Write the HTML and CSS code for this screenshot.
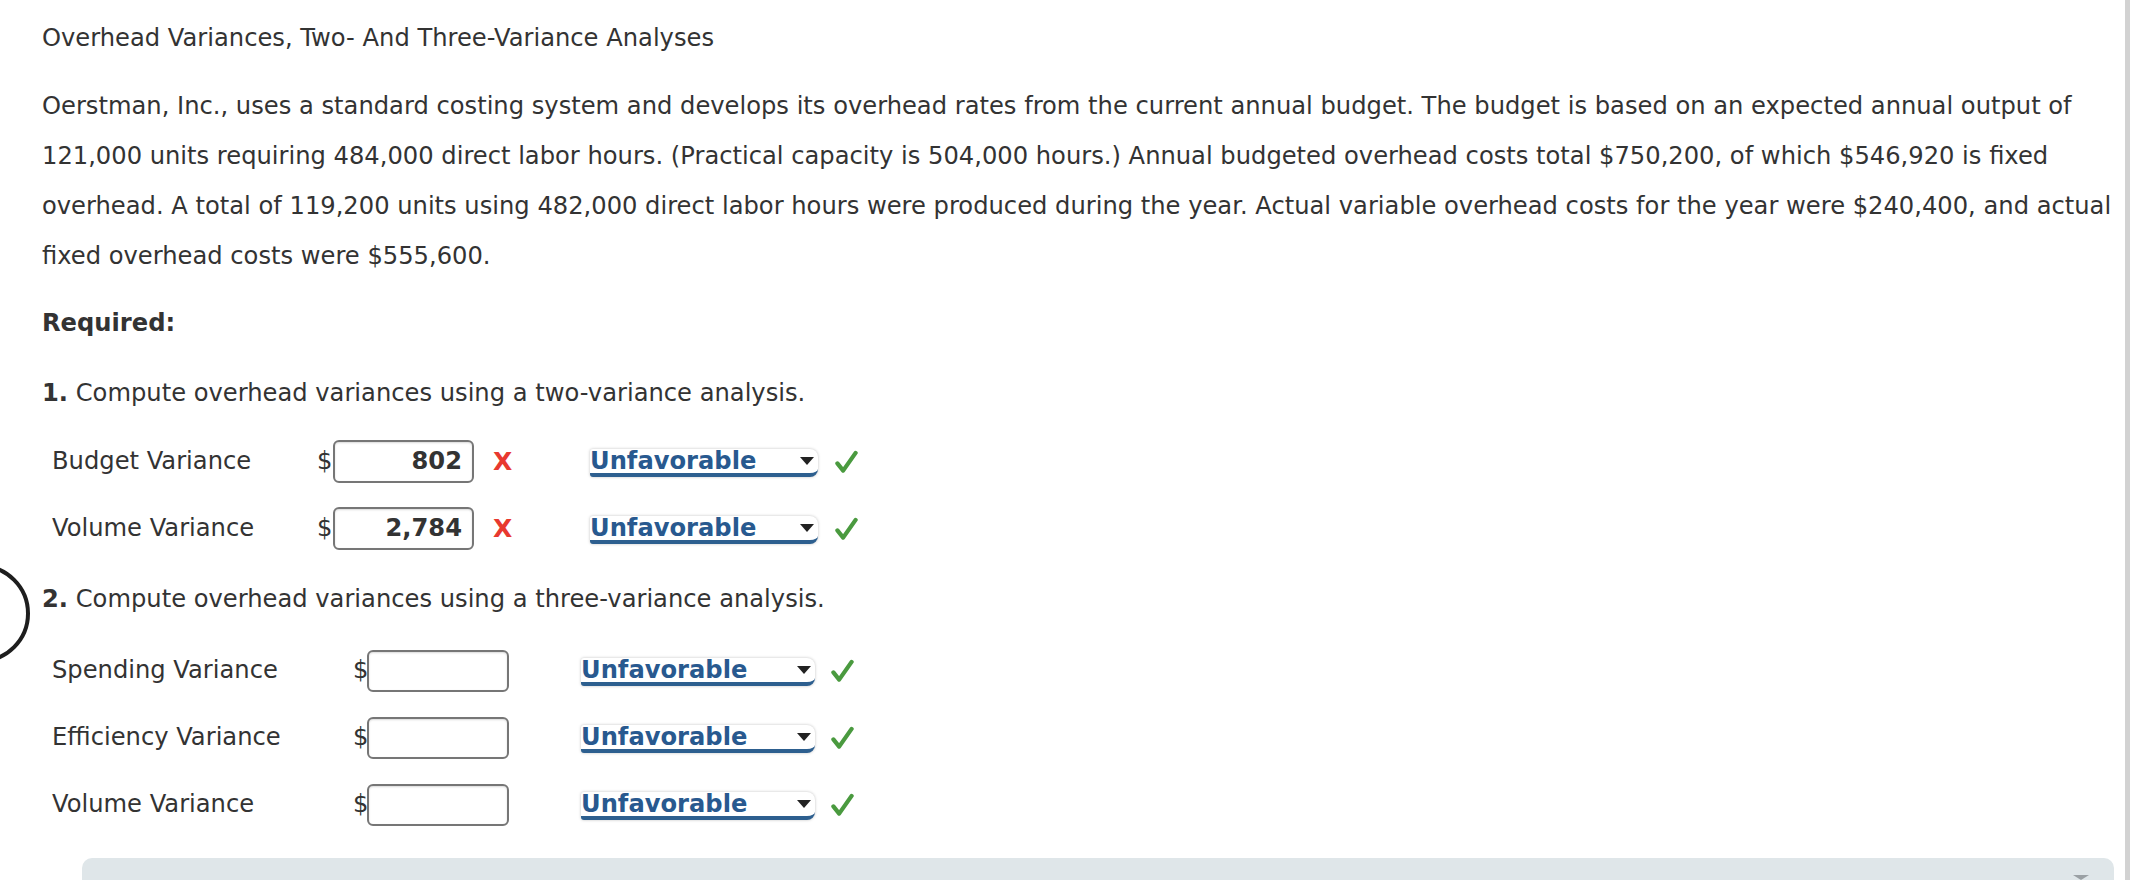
FILE: index.html
```html
<!DOCTYPE html>
<html>
<head>
<meta charset="utf-8">
<link rel="stylesheet" href="styles.css">
</head>
<body>
<div class="page">
  <div class="content">
    <h1 class="title">Overhead Variances, Two- And Three-Variance Analyses</h1>
    <p class="text">Oerstman, Inc., uses a standard costing system and develops its overhead rates from the current annual budget. The budget is based on an expected annual output of 121,000 units requiring 484,000 direct labor hours. (Practical capacity is 504,000 hours.) Annual budgeted overhead costs total $750,200, of which $546,920 is fixed overhead. A total of 119,200 units using 482,000 direct labor hours were produced during the year. Actual variable overhead costs for the year were $240,400, and actual fixed overhead costs were $555,600.</p>
    <p class="required">Required:</p>
    <p class="question q1"><b>1.</b> Compute overhead variances using a two-variance analysis.</p>
    <div class="table t1">
      <div class="row">
        <span class="label">Budget Variance</span>
        <span class="dollar">$</span>
        <span class="box">802</span>
        <span class="wrong">X</span>
        <span class="dropdown">Unfavorable<span class="arrow"></span></span>
        <svg class="check" viewBox="0 0 24 24"><path d="M2.5 13.5 L8.5 21 L21.5 2.5" /></svg>
      </div>
      <div class="row">
        <span class="label">Volume Variance</span>
        <span class="dollar">$</span>
        <span class="box">2,784</span>
        <span class="wrong">X</span>
        <span class="dropdown">Unfavorable<span class="arrow"></span></span>
        <svg class="check" viewBox="0 0 24 24"><path d="M2.5 13.5 L8.5 21 L21.5 2.5" /></svg>
      </div>
    </div>
    <p class="question q2"><b>2.</b> Compute overhead variances using a three-variance analysis.</p>
    <div class="table t2">
      <div class="row">
        <span class="label">Spending Variance</span>
        <span class="dollar">$</span>
        <span class="box"></span>
        <span class="dropdown">Unfavorable<span class="arrow"></span></span>
        <svg class="check" viewBox="0 0 24 24"><path d="M2.5 13.5 L8.5 21 L21.5 2.5" /></svg>
      </div>
      <div class="row">
        <span class="label">Efficiency Variance</span>
        <span class="dollar">$</span>
        <span class="box"></span>
        <span class="dropdown">Unfavorable<span class="arrow"></span></span>
        <svg class="check" viewBox="0 0 24 24"><path d="M2.5 13.5 L8.5 21 L21.5 2.5" /></svg>
      </div>
      <div class="row">
        <span class="label">Volume Variance</span>
        <span class="dollar">$</span>
        <span class="box"></span>
        <span class="dropdown">Unfavorable<span class="arrow"></span></span>
        <svg class="check" viewBox="0 0 24 24"><path d="M2.5 13.5 L8.5 21 L21.5 2.5" /></svg>
      </div>
    </div>
  </div>
  <div class="panel"><span class="panel-mark"></span></div>
  <div class="ring"></div>
</div>
<div class="edge"></div>
</body>
</html>
```

FILE: styles.css
```css
html, body {
  margin: 0;
  padding: 0;
  height: 880px;
  overflow: hidden;
  background: #ffffff;
}
body {
  display: flex;
  font-family: "DejaVu Sans", Verdana, sans-serif;
  color: #333333;
  font-size: 24.2px;
  line-height: 50px;
}
.page {
  position: relative;
  flex: 1;
  display: flex;
  flex-direction: column;
  overflow: hidden;
}
.edge {
  width: 5px;
  background: #d2d2d2;
}
.content {
  padding: 13px 0 0 42px;
}
.title {
  margin: 0;
  font-size: 24.2px;
  font-weight: normal;
  line-height: 50px;
}
.text {
  margin: 18px 0 0 0;
}
.required {
  margin: 17px 0 0 0;
  font-weight: bold;
}
.question {
  margin: 20px 0 0 0;
}
.question b {
  font-weight: bold;
}
.q2 {
  margin-top: 24px;
}
.table {
  display: flex;
  flex-direction: column;
  padding-left: 10px;
}
.t1 {
  margin-top: 22px;
  gap: 24px;
}
.t2 {
  margin-top: 25px;
  gap: 24px;
}
.row {
  display: flex;
  align-items: center;
  height: 43px;
  line-height: 43px;
}
.label {
  width: 265px;
}
.t2 .label {
  width: 301px;
}
.dollar {
  width: 16px;
}
.t2 .dollar {
  width: 14px;
}
.box {
  box-sizing: border-box;
  width: 141px;
  height: 43px;
  border: 2px solid #767676;
  border-radius: 6px;
  box-shadow: inset 0 1px 2px rgba(0,0,0,0.15);
  text-align: right;
  padding-right: 10px;
  font-weight: bold;
  line-height: 39px;
}
.t2 .box {
  width: 142px;
  height: 42px;
}
.wrong {
  margin-left: 19px;
  width: 20px;
  color: #e8392f;
  font-weight: bold;
  font-size: 25px;
}
.dropdown {
  position: relative;
  box-sizing: border-box;
  margin-left: 77px;
  width: 228px;
  height: 28px;
  line-height: 25px;
  margin-top: 2px;
  background: #ffffff;
  border-radius: 3px 8px 8px 3px;
  box-shadow: 0 0 3px rgba(0,0,0,0.25);
  border-bottom: 4px solid #2d5f8f;
  color: #28598f;
  font-weight: bold;
}
.t2 .dropdown {
  margin-left: 72px;
  width: 234px;
}
.arrow {
  position: absolute;
  right: 4px;
  top: 8px;
  width: 0;
  height: 0;
  border-left: 7px solid transparent;
  border-right: 7px solid transparent;
  border-top: 8px solid #222222;
}
.check {
  margin-left: 17px;
  width: 23px;
  height: 24px;
}
.t2 .check {
  margin-left: 16px;
}
.check path {
  fill: none;
  stroke: #4a9a3f;
  stroke-width: 4.4;
  stroke-linecap: round;
  stroke-linejoin: round;
}
.panel {
  position: relative;
  margin: auto 11px 0 82px;
  height: 22px;
  background: #dfe6e9;
  border-radius: 10px 10px 0 0;
}
.panel-mark {
  position: absolute;
  right: 25px;
  bottom: 0;
  width: 0;
  height: 0;
  border-left: 8px solid transparent;
  border-right: 8px solid transparent;
  border-top: 5px solid #9aa0a4;
}
.ring {
  position: absolute;
  left: -69px;
  top: 564px;
  width: 91px;
  height: 91px;
  border: 4px solid #1e1e1e;
  border-radius: 50%;
}
```
